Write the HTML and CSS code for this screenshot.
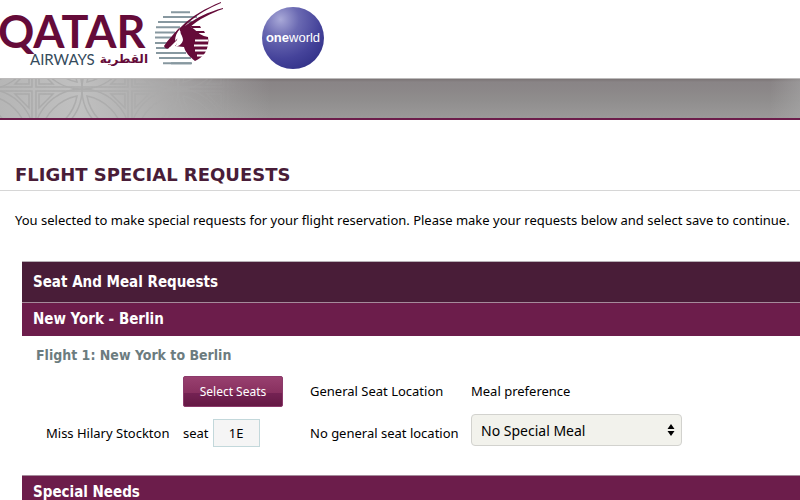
FILE: index.html
```html
<!DOCTYPE html>
<html lang="en">
<head>
  <meta charset="UTF-8">
  <meta name="viewport" content="width=device-width, initial-scale=1.0">
  <title>Flight Special Requests - Qatar Airways</title>
  <link rel="stylesheet" href="styles.css">
</head>
<body>
  <header class="site-header">
    <a href="#" class="brand" aria-label="Qatar Airways">
      <svg class="brand-logo" width="226" height="76" viewBox="0 0 226 76">
        <text class="brand-name" x="-2" y="48">QATAR</text>
        <text class="brand-sub" x="30" y="65">AIRWAYS</text>
        <text class="brand-arabic" x="148" y="63" direction="rtl">القطرية</text>
        <g class="brand-lines">
          <path d="M171 12.300h19M163 17h34M158 22h34M156 27.300h24M155 32.500h20M155 37.500h16M155 43h13M156 48h12M156 53h30M159 58h32M163 63.300h29" />
          <path d="M171 63.300h20" />
        </g>
        <g class="brand-oryx">
          <path d="M221 2C206 8 192 16 182 26C174 33 168 40 164 46C165 49 168 49 169 48C173 41 179 32 188 23C198 14 209 8 221 3z" />
          <path d="M223 8C208 12 196 18 185 26L189 28C199 19 211 13 223 9z" />
          <path d="M183 26C187 25 191 26 194 29C198 33 202 36 208 37C209 42 208 48 205 53C202 57 199 59 195 61C190 57 185 52 184 47C181 47 177 46 175 46C179 42 179 36 181 30z" />
          <path d="M190 26h10l1 2h-9zM195 31h9l1 2h-9z" />
          <path d="M174 34L179 28L177 40L170 47L167 46z" />
        </g>
        <path class="brand-stripes" d="M195 40.500h13M194 45.500h14M195 50.500h12M197 55.500h8" />
        <path class="brand-face" d="M180 29C179 32 183 36 183 40C182 44 179 46 175 47C177 44 177 41 178 38L175 41C175 36 177 32 180 29z" />
      </svg>
    </a>
    <a href="#" class="alliance" aria-label="oneworld">
      <span class="alliance-name"><b>one</b>world</span>
    </a>
  </header>

  <div class="banner">
    <svg class="banner-pattern" width="240" height="39" viewBox="0 0 240 39">
      <defs>
        <linearGradient id="fade">
          <stop offset="0" stop-color="#fff" />
          <stop offset=".5" stop-color="#fff" stop-opacity=".8" />
          <stop offset="1" stop-color="#fff" stop-opacity="0" />
        </linearGradient>
        <mask id="fade-mask"><rect width="240" height="39" fill="url(#fade)" /></mask>
        <g id="corner">
          <path d="M48 0A48 48 0 0 0 0 48A48 48 0 0 0 48 0z" />
          <path d="M43 7A46 46 0 0 0 7 43A44 44 0 0 0 43 7z" />
          <path d="M2 48V2h46M5 5h14L5 19z" />
        </g>
        <pattern id="lattice" x="34" y="10" width="96" height="96" patternUnits="userSpaceOnUse">
          <g fill="none" stroke="#aaa" stroke-width="1.500">
            <use href="#corner" />
            <use href="#corner" transform="rotate(90 48 48)" />
            <use href="#corner" transform="rotate(180 48 48)" />
            <use href="#corner" transform="rotate(270 48 48)" />
          </g>
        </pattern>
      </defs>
      <rect width="240" height="39" fill="url(#lattice)" mask="url(#fade-mask)" />
    </svg>
  </div>

  <main>
    <h1 class="page-title">FLIGHT SPECIAL REQUESTS</h1>
    <p class="intro">You selected to make special requests for your flight reservation. Please make your requests below and select save to continue.</p>

    <form class="requests">
      <h2 class="section-title">Seat And Meal Requests</h2>
      <h3 class="route-title">New York - Berlin</h3>
      <h4 class="flight-title">Flight 1: New York to Berlin</h4>

      <table class="request-table">
        <tr class="row-head">
          <td class="col-name"></td>
          <td class="col-seat"><button type="button" class="seat-button">Select Seats</button></td>
          <th class="col-location" scope="col">General Seat Location</th>
          <th class="col-meal" scope="col"><label for="meal">Meal preference</label></th>
        </tr>
        <tr class="row-passenger">
          <td class="col-name">Miss Hilary Stockton</td>
          <td class="col-seat">
            <div class="seat-field">
              <label for="seat">seat</label>
              <input type="text" id="seat" class="seat-input" value="1E" readonly>
            </div>
          </td>
          <td class="col-location">No general seat location</td>
          <td class="col-meal">
            <div class="meal-field">
              <select id="meal" class="meal-select">
                <option>No Special Meal</option>
              </select>
              <svg class="meal-arrows" width="8" height="12" viewBox="0 0 8 12">
                <path d="M4 0l3.500 5h-7zM4 12l3.500-5h-7z" />
              </svg>
            </div>
          </td>
        </tr>
      </table>

      <h3 class="route-title">Special Needs</h3>
    </form>
  </main>
</body>
</html>
```

FILE: styles.css
```css
:root {
  --plum-dark: #491d38;
  --plum: #6c1d4b;
  --logo-plum: #650b39;
  --slate: #6c7c7f;
}

* {
  margin: 0;
  padding: 0;
  box-sizing: border-box;
}

body {
  font-family: Tahoma, "Noto Sans", sans-serif;
  font-size: 13px;
  line-height: 18px;
  color: #000;
  background: #fff;
  overflow-x: hidden;
}

/* Header */
.site-header {
  display: flex;
  align-items: flex-start;
  gap: 36px;
  height: 78px;
}

.brand,
.brand-logo {
  display: block;
}

.brand-name {
  font-family: Lato, sans-serif;
  font-size: 45px;
  font-weight: 700;
  fill: var(--logo-plum);
}

.brand-sub {
  font-family: Lato, sans-serif;
  font-size: 15px;
  fill: #354b5c;
}

.brand-arabic {
  font-family: "DejaVu Sans", sans-serif;
  font-size: 12px;
  font-weight: 700;
  fill: var(--logo-plum);
}

.brand-lines {
  fill: none;
  stroke: #8798a0;
  stroke-width: 2;
}

.brand-oryx {
  fill: var(--logo-plum);
}

.brand-stripes {
  fill: none;
  stroke: #fff;
  stroke-width: 2;
}

.brand-face {
  fill: #fff;
}

.alliance {
  display: flex;
  align-items: center;
  justify-content: center;
  width: 62px;
  height: 62px;
  margin-top: 7px;
  border-radius: 50%;
  background: radial-gradient(circle at 30% 20%, #a9a9d8 0, #6a69b2 28%, #45439a 60%, #26267c 100%);
  color: #fff;
  text-decoration: none;
}

.alliance-name {
  font-family: "Liberation Sans", Arial, sans-serif;
  font-size: 13px;
}

/* Grey strip under the header */
.banner {
  height: 42px;
  border-top: 1px solid #bcbaba;
  border-bottom: 2px solid var(--plum);
  background:
    linear-gradient(90deg, #b6b6b6 0, #c0c0c0 80px, rgba(180, 180, 180, .7) 170px, rgba(160, 160, 160, 0) 270px),
    linear-gradient(270deg, rgba(170, 170, 170, .5) 0, rgba(170, 170, 170, 0) 30px),
    linear-gradient(#7b7475 0, #898486 3px, #8c8889 12px, #908e8e 22px, #9b9999 100%);
}

.banner-pattern {
  display: block;
}

/* Content */
.page-title {
  padding: 43px 15px 3px;
  border-bottom: 1px solid #d6d6d6;
  font-family: Verdana, "DejaVu Sans", sans-serif;
  font-size: 18px;
  line-height: 24px;
  color: var(--plum-dark);
}

.intro {
  padding: 20px 0 0 15px;
  white-space: nowrap;
}

.requests {
  margin: 32px 0 0 22px;
}

.section-title,
.route-title,
.flight-title {
  font-family: Tahoma, "DejaVu Sans Condensed", "DejaVu Sans", sans-serif;
}

.section-title,
.route-title {
  padding-left: 11px;
  font-size: 15px;
  color: #fff;
}

.section-title {
  line-height: 40px;
  border-top: 1px solid #b8b0b6;
  background: var(--plum-dark);
}

.route-title {
  line-height: 33px;
  border-top: 1px solid #a58b9b;
  background: var(--plum);
}

.flight-title {
  padding: 9px 0 0 14px;
  font-size: 14px;
  line-height: 20px;
  color: var(--slate);
}

.request-table {
  margin: 8px 0 24px 24px;
  border-collapse: collapse;
  table-layout: fixed;
  width: 636px;
}

.request-table th,
.request-table td {
  font-weight: 400;
  text-align: left;
  vertical-align: middle;
  white-space: nowrap;
}

.row-head {
  height: 36px;
}

.row-passenger {
  height: 42px;
}

.row-passenger td {
  padding-top: 6px;
}

.row-passenger .col-meal {
  padding-top: 0;
}

.col-name {
  width: 137px;
}

.col-seat {
  width: 127px;
}

.col-location {
  width: 161px;
}

.seat-button {
  display: block;
  width: 100px;
  height: 31px;
  border: 1px solid #8c3a6b;
  border-radius: 2px;
  background: linear-gradient(#98406f 0, #88305f 55%, #742253 56%, #651944 100%);
  font-family: inherit;
  font-size: 12px;
  color: #fff;
  cursor: pointer;
}

.seat-field {
  display: flex;
  align-items: center;
  gap: 4px;
}

.seat-input {
  width: 47px;
  height: 28px;
  border: 1px solid #c3d8db;
  background: #f5f5f5;
  font: inherit;
  text-align: center;
}

.meal-field {
  position: relative;
}

.meal-select {
  display: block;
  width: 100%;
  height: 32px;
  padding: 0 9px;
  border: 1px solid #d2d2ce;
  border-radius: 4px;
  background: #f2f2ec;
  font-family: "Lucida Grande", "Noto Sans", sans-serif;
  font-size: 14px;
  color: #000;
  appearance: none;
}

.meal-arrows {
  position: absolute;
  top: 10px;
  right: 7px;
  pointer-events: none;
}
```
